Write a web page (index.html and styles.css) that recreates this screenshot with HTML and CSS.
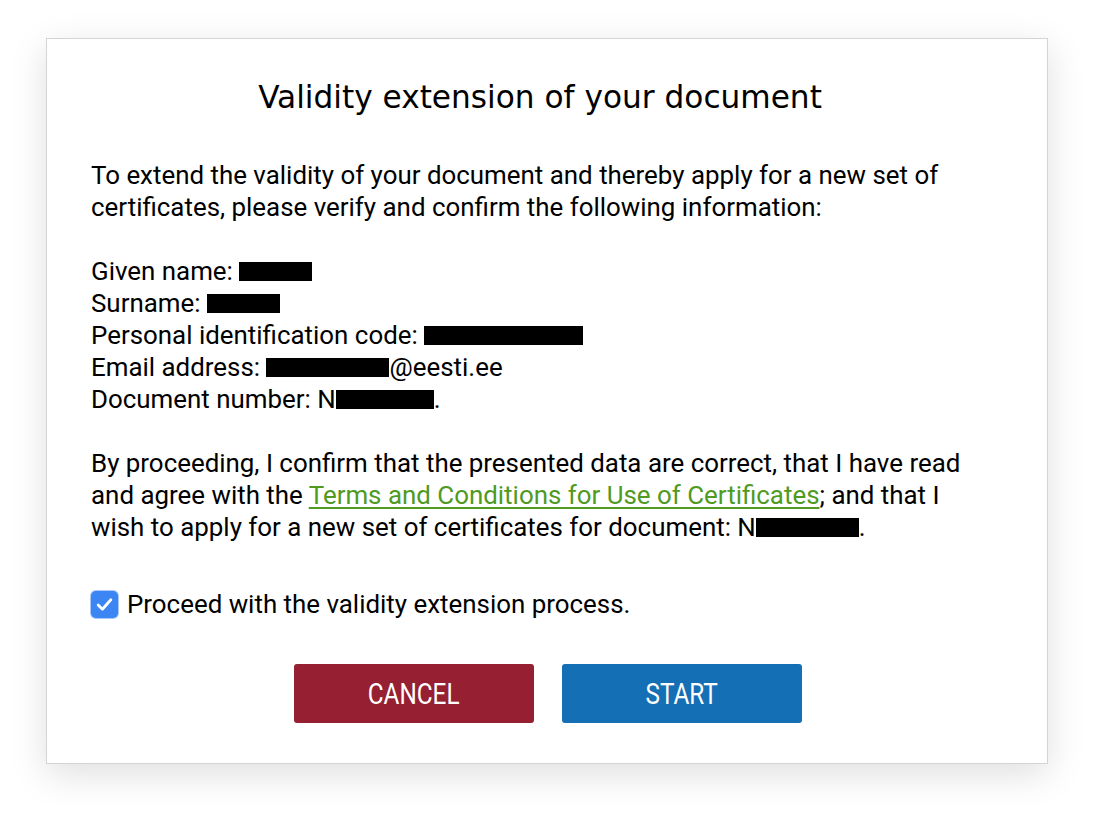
FILE: index.html
```html
<!DOCTYPE html>
<html lang="en">
<head>
<meta charset="utf-8">
<title>Validity extension</title>
<link rel="stylesheet" href="styles.css">
</head>
<body>
<div class="dialog">
  <h1 class="dlg_title">Validity extension of your document</h1>
  <p class="dlg_text">To extend the validity of your document and thereby apply for a new set of certificates, please verify and confirm the following information:</p>
  <p class="dlg_text">
    Given name: <span class="redact" style="width:73px"></span><br>
    Surname: <span class="redact" style="width:73px"></span><br>
    Personal identification code: <span class="redact" style="width:159px"></span><br>
    Email address: <span class="redact" style="width:123px"></span>@eesti.ee<br>
    Document number: N<span class="redact" style="width:98px"></span>.
  </p>
  <p class="dlg_text">By proceeding, I confirm that the presented data are correct, that I have read and agree with the <a class="dlg_link" href="#">Terms and Conditions for Use of Certificates</a>; and that I wish to apply for a new set of certificates for document: N<span class="redact" style="width:103px"></span>.</p>
  <label class="dlg_check">
    <span class="checkbox">
      <svg width="17" height="15" viewBox="0 0 16 14"><path d="M2 7.5 L6 11.5 L14 2.5" fill="none" stroke="#fff" stroke-width="2.6" stroke-linecap="round" stroke-linejoin="round"/></svg>
    </span>
    Proceed with the validity extension process.
  </label>
  <div class="dlg_buttons">
    <button class="btn btn_cancel"><span>CANCEL</span></button>
    <button class="btn btn_start"><span>START</span></button>
  </div>
</div>
</body>
</html>
```

FILE: styles.css
```css
body {
  margin: 0;
  padding: 38px 46px 54px 46px;
  background: #ffffff;
  font-family: Roboto, "Liberation Sans", sans-serif;
}

.dialog {
  width: 1002px;
  height: 726px;
  box-sizing: border-box;
  background: #ffffff;
  border: 1px solid #d4d4d4;
  box-shadow: 0 10px 35px rgba(0, 0, 0, 0.13);
  padding: 38px 60px 0 44px;
  color: #000;
}

.dlg_title {
  margin: 0 0 42px 0;
  padding-left: 2px;
  text-align: center;
  font-family: "DejaVu Sans", sans-serif;
  font-weight: normal;
  font-size: 31.2px;
  line-height: 40px;
}

.dlg_text {
  margin: 0 0 32px 0;
  font-size: 25.9px;
  line-height: 32px;
}

.redact {
  display: inline-block;
  height: 19px;
  background: #000;
  vertical-align: -1px;
}

.dlg_link {
  color: #4f9a1f;
  text-decoration: underline;
  text-underline-offset: 3px;
}

.dlg_check {
  display: flex;
  align-items: center;
  gap: 9px;
  margin-top: 45px;
  font-size: 25.9px;
  line-height: 32px;
}

.checkbox {
  width: 27px;
  height: 27px;
  box-sizing: border-box;
  border-radius: 5px;
  background: #3b86f2;
  box-shadow: 0 0 0 1px #a9c8f5;
  display: flex;
  align-items: center;
  justify-content: center;
}

.dlg_buttons {
  display: flex;
  justify-content: center;
  gap: 28px;
  margin-top: 44px;
  padding-left: 18px;
}

.btn {
  width: 240px;
  height: 59px;
  border: none;
  border-radius: 3px;
  color: #fff;
  font-family: Roboto, sans-serif;
  font-size: 30px;
  cursor: pointer;
}

.btn span {
  display: inline-block;
  transform: scaleX(0.81);
}

.btn_cancel {
  background: #961f32;
}

.btn_start {
  background: #146fb5;
}
```
